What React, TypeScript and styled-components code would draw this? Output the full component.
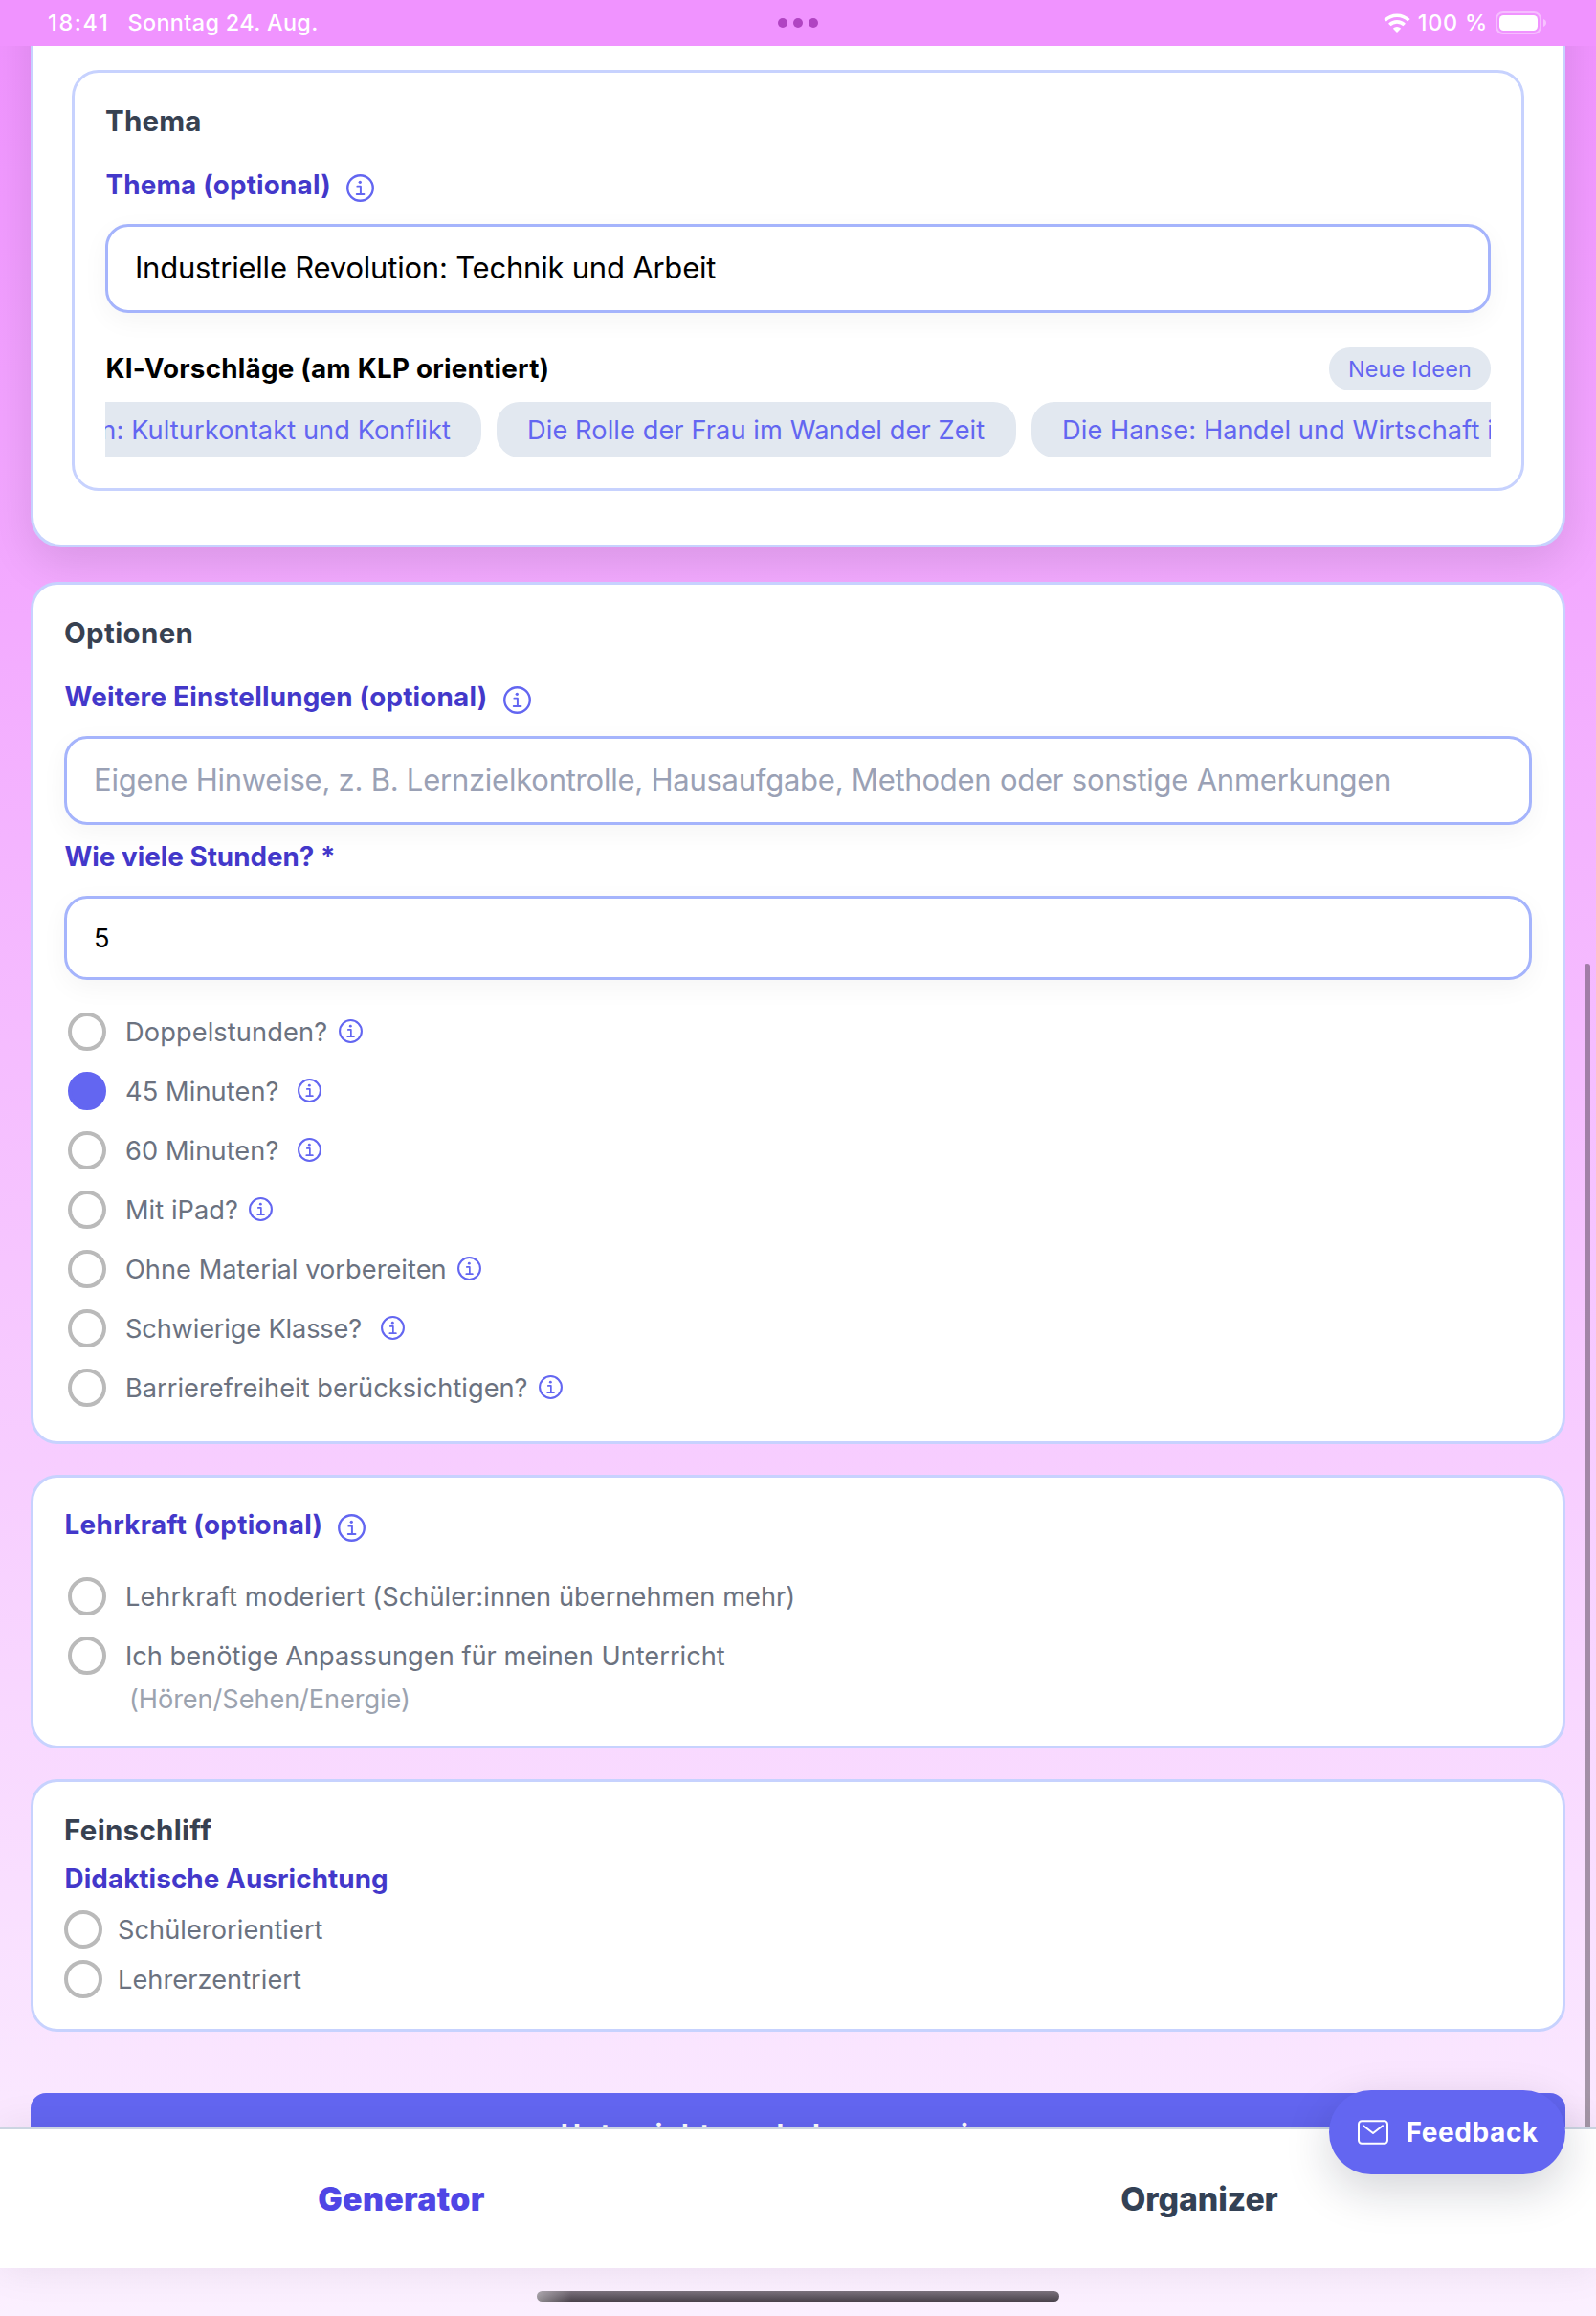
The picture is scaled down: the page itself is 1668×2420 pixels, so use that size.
import React from "react";
import styled, { createGlobalStyle } from "styled-components";

const GlobalStyle = createGlobalStyle`
  *, *::before, *::after { box-sizing: border-box; }
  body { margin: 0; font-family: Inter, "Liberation Sans", sans-serif; }
  button, input { font: inherit; }
`;

const Screen = styled.div`
  position: relative;
  display: flex;
  flex-direction: column;
  width: 1668px;
  height: 2420px;
  overflow: hidden;
  background: linear-gradient(180deg, #f092ff 0%, #fbf0ff 100%);
`;

/* ---------- status bar ---------- */

const StatusBar = styled.header`
  flex: none;
  display: grid;
  grid-template-columns: 1fr auto 1fr;
  align-items: center;
  height: 48px;
  padding: 0 52px 0 50px;
  background: #f093ff;
  color: #fff;
  font-size: 23.4px;
  font-weight: 500;
  line-height: 48px;
  white-space: nowrap;
`;

const StatusLeft = styled.div`
  display: flex;
  gap: 19px;
`;

const Clock = styled.span`
  letter-spacing: 1.7px;
`;

const Day = styled.span`
  letter-spacing: 0.36px;
`;

const Dots = styled.div`
  display: flex;
  gap: 6px;
  padding-left: 1px;
`;

const Dot = styled.i`
  width: 10px;
  height: 10px;
  border-radius: 50%;
  background: #b044c2;
`;

const StatusRight = styled.div`
  display: flex;
  justify-content: flex-end;
  align-items: center;
`;

const Percent = styled.span`
  margin: 0 8px 0 8px;
  letter-spacing: 0.8px;
`;

/* ---------- cards ---------- */

const Content = styled.main`
  flex: none;
  height: 2175px;
  padding: 0 32px;
  overflow: hidden;
`;

const Card = styled.section<{ $pt: number; $pb: number; $mt: number }>`
  margin-top: ${(p) => p.$mt}px;
  padding: ${(p) => p.$pt}px 32px ${(p) => p.$pb}px;
  border: 3px solid #c7d2fe;
  border-radius: 28px;
  background: #fff;
  position: relative;
`;

const TopCard = styled.section`
  margin-top: -80px;
  padding: 105px 40px 56px;
  border: 3px solid #c7d2fe;
  border-top: 0;
  border-radius: 0 0 32px 32px;
  background: #fff;
  box-shadow: 0 16px 48px rgba(0, 0, 0, 0.11);
`;

const InnerCard = styled.div`
  padding: 30px 32px 32px;
  border: 3px solid #c7d2fe;
  border-radius: 28px;
`;

const Heading = styled.h2<{ $ls: number }>`
  margin: 0;
  height: 40px;
  color: #374151;
  font-size: 29.5px;
  font-weight: 700;
  line-height: 40px;
  letter-spacing: ${(p) => p.$ls}px;
`;

const Label = styled.div<{ $mt: number; $ls: number }>`
  display: flex;
  align-items: center;
  height: 40px;
  margin-top: ${(p) => p.$mt}px;
  padding-left: 0.5px;
  color: #4338ca;
  font-size: 27.8px;
  font-weight: 700;
  line-height: 40px;
  letter-spacing: ${(p) => p.$ls}px;
  white-space: nowrap;
`;

const Field = styled.input<{ $mt: number; $h: number; $size: number; $ls: number; $pb?: number }>`
  display: block;
  width: 100%;
  height: ${(p) => p.$h}px;
  margin-top: ${(p) => p.$mt}px;
  padding: 0 27px ${(p) => p.$pb ?? 0}px 28px;
  border: 3px solid #a5b4fc;
  border-radius: 24px;
  outline: none;
  background: #fff;
  box-shadow: 0 8px 28px rgba(0, 0, 0, 0.045);
  color: #000;
  font-size: ${(p) => p.$size}px;
  letter-spacing: ${(p) => p.$ls}px;

  &::placeholder {
    color: #9aa1b5;
    opacity: 1;
  }
`;

/* ---------- suggestions ---------- */

const SuggestHead = styled.div`
  display: flex;
  justify-content: space-between;
  align-items: center;
  height: 45px;
  margin-top: 36px;
  padding-left: 0.5px;
`;

const SuggestTitle = styled.h3`
  margin: 0;
  color: #000;
  font-size: 27.8px;
  font-weight: 700;
  line-height: 45px;
  letter-spacing: 0.23px;
`;

const SmallChip = styled.button`
  width: 169px;
  height: 45px;
  padding: 0;
  border: 0;
  border-radius: 22px;
  background: #e2e8f0;
  color: #6366f1;
  font-size: 23.4px;
  line-height: 45px;
  letter-spacing: 0.22px;
`;

const ChipRow = styled.div`
  display: flex;
  gap: 16px;
  margin-top: 12px;
  overflow: hidden;
`;

const Chip = styled.button<{ $w: number; $shift?: number }>`
  flex: none;
  display: flex;
  justify-content: ${(p) => (p.$shift ? "flex-end" : "flex-start")};
  align-items: center;
  width: ${(p) => p.$w}px;
  height: 58px;
  margin-left: ${(p) => -(p.$shift ?? 0)}px;
  padding: 0 32px;
  border: 0;
  border-radius: 24px;
  background: #e2e8f0;
  color: #6366f1;
  font-size: 27.2px;
  letter-spacing: 0.09px;
  white-space: nowrap;
`;

/* ---------- radios ---------- */

const RadioList = styled.div<{ $mt: number; $gap: number; $indent?: number }>`
  display: flex;
  flex-direction: column;
  gap: ${(p) => p.$gap}px;
  margin-top: ${(p) => p.$mt}px;
  padding-left: ${(p) => p.$indent ?? 0}px;
`;

const RadioRow = styled.label<{ $gap?: number }>`
  display: flex;
  align-items: center;
  gap: ${(p) => p.$gap ?? 20}px;
  height: 40px;
  color: #6b7280;
  font-size: 27.2px;
  line-height: 40px;
  white-space: nowrap;
`;

const Circle = styled.span<{ $on?: boolean }>`
  flex: none;
  width: 40px;
  height: 40px;
  border: 4px solid ${(p) => (p.$on ? "#6366f1" : "#bababa")};
  border-radius: 50%;
  background: ${(p) => (p.$on ? "#6366f1" : "#fff")};
`;

const RadioText = styled.span<{ $ls?: number }>`
  display: flex;
  align-items: center;
  padding-top: 2px;
  letter-spacing: ${(p) => p.$ls ?? 0.05}px;
`;

const SubNote = styled.div`
  height: 40px;
  margin: 6px 0 -1px 68px;
  color: #9ca3af;
  font-size: 27.2px;
  line-height: 40px;
  letter-spacing: -0.09px;
`;

const InfoSvg = styled.svg<{ $size: number; $ml: number; $dy: number }>`
  flex: none;
  width: ${(p) => p.$size}px;
  height: ${(p) => p.$size}px;
  margin-left: ${(p) => p.$ml}px;
  margin-top: ${(p) => p.$dy * 2}px;
`;

const Info = ({ size, ml, dy = 0 }: { size: number; ml: number; dy?: number }) => (
  <InfoSvg $size={size} $ml={ml} $dy={dy} viewBox="0 0 28 28" fill="none" stroke="#6366f1">
    <circle cx="14" cy="14" r="12.8" strokeWidth="2.3" />
    <circle cx="13.8" cy="8" r="1.6" fill="#6366f1" stroke="none" />
    <path d="M11 12.2h3.4v8M10.4 20.3h7.4" strokeWidth="1.9" strokeLinecap="round" strokeLinejoin="round" />
  </InfoSvg>
);

/* ---------- bottom ---------- */

const Submit = styled.button`
  display: block;
  width: 100%;
  height: 85px;
  margin-top: 64px;
  padding: 0;
  border: 0;
  border-radius: 16px;
  background: #6366f1;
  color: #fff;
  font-size: 29px;
  font-weight: 700;
  letter-spacing: 1.3px;
`;

const TabBar = styled.nav`
  position: relative;
  flex: none;
  display: grid;
  grid-template-columns: 1fr 1fr;
  height: 147px;
  border-top: 2px solid #cbd5e1;
  background: #fff;
  box-shadow: 0 0 40px rgba(0, 0, 0, 0.08);
`;

const Tab = styled.a<{ $active?: boolean }>`
  display: flex;
  align-items: center;
  justify-content: center;
  padding-left: 5px;
  color: ${(p) => (p.$active ? "#4f46e5" : "#334155")};
  font-size: 33.8px;
  font-weight: ${(p) => (p.$active ? 900 : 800)};
  letter-spacing: ${(p) => (p.$active ? 0.35 : -0.1)}px;
`;

const HomeArea = styled.div`
  flex: 1;
  display: flex;
  justify-content: center;
  padding-top: 24px;
`;

const HomeIndicator = styled.div`
  width: 546px;
  height: 11px;
  border-radius: 6px;
  background: linear-gradient(90deg, rgba(255, 255, 255, 0.4), rgba(255, 255, 255, 0) 36px),
    linear-gradient(180deg, #7b717d, #4a434c);
`;

const ScrollThumb = styled.div`
  position: absolute;
  top: 1007px;
  right: 6px;
  width: 6px;
  height: 1216px;
  border-radius: 3px 3px 0 0;
  background: rgba(60, 50, 60, 0.45);
`;

const Feedback = styled.button`
  position: absolute;
  top: 2184px;
  right: 32px;
  display: flex;
  align-items: center;
  width: 247px;
  height: 88px;
  padding: 0 0 0 30px;
  border: 0;
  border-radius: 44px;
  background: #6366f1;
  box-shadow: 0 16px 48px rgba(15, 23, 42, 0.18);
  color: #fff;
  font-size: 28px;
  font-weight: 700;
  letter-spacing: 0.6px;
  white-space: nowrap;
`;

const MailSvg = styled.svg`
  flex: none;
  width: 32px;
  height: 26px;
  margin-right: 18.5px;
`;

const options = [
  { text: "Doppelstunden?", gap: 11.5, ls: 0.12 },
  { text: "45 Minuten?", gap: 19.5, ls: 0.1, on: true },
  { text: "60 Minuten?", gap: 19.5, ls: 0.1 },
  { text: "Mit iPad?", gap: 11, ls: 0.06 },
  { text: "Ohne Material vorbereiten", gap: 11, ls: 0.05 },
  { text: "Schwierige Klasse?", gap: 19.5, ls: -0.15 },
  { text: "Barrierefreiheit berücksichtigen?", gap: 11.5, ls: 0.03 },
];

export default function App() {
  return (
    <Screen>
      <GlobalStyle />
      <StatusBar>
        <StatusLeft>
          <Clock>18:41</Clock>
          <Day>Sonntag 24. Aug.</Day>
        </StatusLeft>
        <Dots>
          <Dot />
          <Dot />
          <Dot />
        </Dots>
        <StatusRight>
          <svg width="28" height="20" viewBox="0 0 28 20" fill="none" stroke="#fff" strokeWidth="3.6">
            <path d="M1.6 7.3A17.6 17.6 0 0 1 26.4 7.3" />
            <path d="M6.3 12A11 11 0 0 1 21.7 12" />
            <path d="M14 20l-4.2-4.3a6 6 0 0 1 8.4 0z" fill="#fff" stroke="none" />
          </svg>
          <Percent>100 %</Percent>
          <svg width="53" height="24" viewBox="0 0 53 24" fill="none">
            <rect x="1" y="1" width="46" height="22" rx="7" stroke="#fff" strokeOpacity="0.4" strokeWidth="2" />
            <rect x="4" y="4" width="40" height="16" rx="4.5" fill="#fff" />
            <path d="M50 8c2 .8 3 2.200 3 4s-1 3.200-3 4z" fill="#fff" fillOpacity="0.45" />
          </svg>
        </StatusRight>
      </StatusBar>

      <Content>
        <TopCard>
          <InnerCard>
            <Heading $ls={0.2}>Thema</Heading>
            <Label $mt={27} $ls={0.2}>
              Thema (optional)
              <Info size={29} ml={16} dy={3} />
            </Label>
            <Field $mt={21} $h={93} $size={31} $ls={-0.21} $pb={2} readOnly value="Industrielle Revolution: Technik und Arbeit" />
            <SuggestHead>
              <SuggestTitle>KI-Vorschläge (am KLP orientiert)</SuggestTitle>
              <SmallChip>Neue Ideen</SmallChip>
            </SuggestHead>
            <ChipRow>
              <Chip $w={660} $shift={267}>Römer und Germanen: Kulturkontakt und Konflikt</Chip>
              <Chip $w={543}>Die Rolle der Frau im Wandel der Zeit</Chip>
              <Chip $w={700}>Die Hanse: Handel und Wirtschaft im Mittelalter</Chip>
            </ChipRow>
          </InnerCard>
        </TopCard>

        <Card $mt={36} $pt={30} $pb={36}>
          <Heading $ls={0.35}>Optionen</Heading>
          <Label $mt={27} $ls={0.22}>
            Weitere Einstellungen (optional)
            <Info size={29} ml={17} dy={3} />
          </Label>
          <Field
            $mt={21}
            $h={93}
            $size={31}
            $ls={-0.24}
            $pb={2}
            placeholder="Eigene Hinweise, z. B. Lernzielkontrolle, Hausaufgabe, Methoden oder sonstige Anmerkungen"
          />
          <Label $mt={13} $ls={0}>Wie viele Stunden? *</Label>
          <Field $mt={21} $h={88} $size={27.2} $ls={0} readOnly value="5" />
          <RadioList $mt={34} $gap={22} $indent={4}>
            {options.map((o) => (
              <RadioRow key={o.text}>
                <Circle $on={o.on} />
                <RadioText $ls={o.ls}>
                  {o.text}
                  <Info size={25} ml={o.gap} dy={-1.5} />
                </RadioText>
              </RadioRow>
            ))}
          </RadioList>
        </Card>

        <Card $mt={32} $pt={29} $pb={29}>
          <Label $mt={0} $ls={0.35}>
            Lehrkraft (optional)
            <Info size={29} ml={15.5} dy={3} />
          </Label>
          <RadioList $mt={35} $gap={22} $indent={4}>
            <RadioRow>
              <Circle />
              <RadioText $ls={0.06}>Lehrkraft moderiert (Schüler:innen übernehmen mehr)</RadioText>
            </RadioRow>
            <RadioRow>
              <Circle />
              <RadioText $ls={0.01}>Ich benötige Anpassungen für meinen Unterricht</RadioText>
            </RadioRow>
          </RadioList>
          <SubNote>(Hören/Sehen/Energie)</SubNote>
        </Card>

        <Card $mt={32} $pt={30} $pb={32}>
          <Heading $ls={0.3}>Feinschliff</Heading>
          <Label $mt={11} $ls={0.09}>Didaktische Ausrichtung</Label>
          <RadioList $mt={13} $gap={12}>
            <RadioRow $gap={16}>
              <Circle />
              <RadioText>Schülerorientiert</RadioText>
            </RadioRow>
            <RadioRow $gap={16}>
              <Circle />
              <RadioText>Lehrerzentriert</RadioText>
            </RadioRow>
          </RadioList>
        </Card>

        <Submit>Unterrichtsvorhaben generieren</Submit>
      </Content>

      <TabBar>
        <Tab $active>Generator</Tab>
        <Tab>Organizer</Tab>
      </TabBar>
      <HomeArea>
        <HomeIndicator />
      </HomeArea>

      <ScrollThumb />
      <Feedback>
        <MailSvg viewBox="0 0 32 26" fill="none" stroke="#fff" strokeWidth="2" strokeLinecap="round" strokeLinejoin="round">
          <rect x="1" y="1.200" width="30" height="23.600" rx="3.200" />
          <path d="M6 6.200l10 7.800 10-7.800" />
        </MailSvg>
        Feedback
      </Feedback>
    </Screen>
  );
}
